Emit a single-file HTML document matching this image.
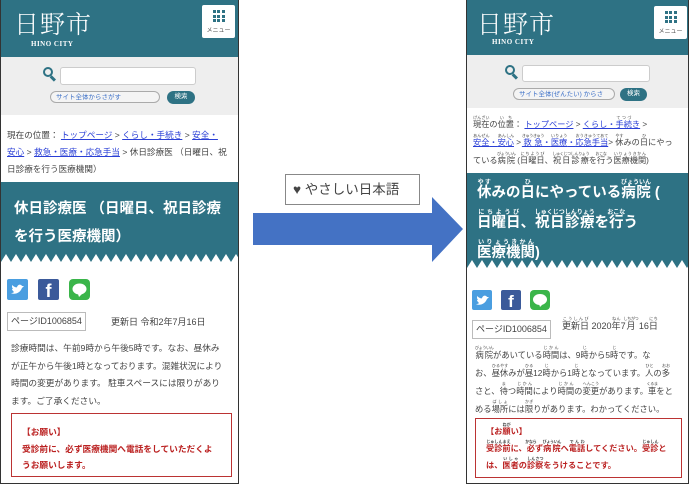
<!DOCTYPE html>
<html><head><meta charset="utf-8"><style>
*{margin:0;padding:0;box-sizing:border-box}
body{width:690px;height:484px;background:#fff;position:relative;overflow:hidden;font-family:"Liberation Sans","Noto Sans CJK JP",sans-serif;color:#333}
.ph{position:absolute;top:0;overflow:hidden;background:#fff}
.hd{background:#2e7284;position:relative}
.logo{position:absolute;color:#fff;font-family:"Liberation Serif","Noto Serif CJK SC",serif;font-size:25px;letter-spacing:1px;font-weight:300}
.city{position:absolute;color:#fff;font-family:"Liberation Serif",serif;font-size:7px;font-weight:bold;letter-spacing:.5px}
.menu{position:absolute;background:#fff;border-radius:2px;width:33px;height:33px;font-size:6px;color:#555;text-align:center}
.dots{display:grid;grid-template-columns:repeat(3,3px);gap:1.5px;width:12px;margin:5px auto 3px}
.dots i{width:3px;height:3px;background:#2e7284;display:block}
.sr{background:#eee;position:relative}
.inp{position:absolute;background:#fff;border:1px solid #ccc;border-radius:3px}
.sel{position:absolute;border:1px solid #aaa;border-radius:8px;background:#f4f4f4;font-size:6.5px;color:#3b6fc7;padding-left:5px;line-height:11px;white-space:nowrap;overflow:hidden}
.btn{position:absolute;background:#2e7284;color:#fff;border-radius:7px;font-size:6.5px;text-align:center;line-height:12px}
.mag{position:absolute;width:10px;height:10px;border:2.5px solid #2e7284;border-radius:50%}
.mag:after{content:"";position:absolute;width:6px;height:2.5px;background:#2e7284;transform:rotate(45deg);left:5px;top:8px}
.bc{color:#444;padding:0 6px;white-space:nowrap}
.bc a{color:#2a3fd6;text-decoration:underline}
.tt{background:#2e7284;color:#fff;font-weight:bold;position:relative;white-space:nowrap}
.ic{position:absolute;width:21px;height:21px;border-radius:2px;overflow:hidden}
.pid{position:absolute;border:1px solid #bbb;font-size:9px;padding:0 3px;line-height:17px;color:#444}
.upd{position:absolute;font-size:9px;color:#444;white-space:nowrap}
.tx{position:absolute;color:#444;white-space:nowrap}
.box{position:absolute;border:1.5px solid #b33;color:#b22;font-weight:bold;white-space:nowrap}
rt{font-size:4px;color:#444;letter-spacing:-0.3px}
.tt rt{font-size:6px;color:#fff;letter-spacing:0}
.zz{position:absolute;left:0}
</style></head><body>

<!-- LEFT PHONE -->
<div class="ph" style="left:0;width:239px;height:484px;border:1px solid #333;border-top:none">
 <div class="hd" style="height:57px">
  <div class="logo" style="left:13px;top:5px">日野市</div>
  <div class="city" style="left:30px;top:40px">HINO CITY</div>
  <div class="menu" style="left:201px;top:5px"><div class="dots"><i></i><i></i><i></i><i></i><i></i><i></i><i></i><i></i><i></i></div>メニュー</div>
 </div>
 <div class="sr" style="height:58px">
  <div class="mag" style="left:42px;top:10px"></div>
  <div class="inp" style="left:59px;top:10px;width:136px;height:18px"></div>
  <div class="sel" style="left:49px;top:34px;width:110px;height:12px">サイト全体からさがす</div>
  <div class="btn" style="left:166px;top:34px;width:28px;height:13px">検索</div>
 </div>
 <div class="bc" style="height:67px;padding-top:12px;font-size:8.6px;line-height:17px">現在の位置： <a>トップページ</a> &gt; <a>くらし・手続き</a> &gt; <a>安全・</a><br><a>安心</a> &gt; <a>救急・医療・応急手当</a> &gt; 休日診療医 （日曜日、祝<br>日診療を行う医療機関）</div>
 <div class="tt" style="height:80px;padding:13px 0 0 13px;font-size:14.5px;line-height:28px">休日診療医 （日曜日、祝日診療<br>を行う医療機関）
  <svg class="zz" style="top:72px" width="240" height="8"><defs><pattern id="z1" width="10" height="8" patternUnits="userSpaceOnUse"><polygon points="0,8 5,0 10,8" fill="#fff"/></pattern></defs><rect width="240" height="8" fill="url(#z1)"/></svg></div>
 <div class="ic" style="left:6px;top:279px;background:#4a9ee0"><svg width="21" height="21"><path d="M4 14c4 2 9 0 11-5l2-2-2 0c-1-2-4-2-5 1 0 1-3 0-5-2 0 2 0 3 1 4l-1 0c0 1 1 2 2 3-1 1-2 1-3 1z" fill="#fff"/></svg></div>
 <div class="ic" style="left:37px;top:279px;background:#3b5a9a;color:#fff;font-size:18px;font-weight:bold;text-align:center;line-height:25px">f</div>
 <div class="ic" style="left:68px;top:279px;background:#3ab54a;border-radius:4px"><svg width="21" height="21"><ellipse cx="10.5" cy="10" rx="7" ry="5.5" fill="#fff"/><path d="M9 15l1 3 3-3z" fill="#fff"/></svg></div>
 <div class="pid" style="left:6px;top:312px">ページID1006854</div>
 <div class="upd" style="left:110px;top:315px">更新日 令和2年7月16日</div>
 <div class="tx" style="left:10px;top:340px;line-height:17.5px;font-size:8.7px">診療時間は、午前9時から午後5時です。なお、昼休み<br>が正午から午後1時となっております。混雑状況により<br>時間の変更があります。 駐車スペースには限りがあり<br>ます。ご了承ください。</div>
 <div class="box" style="left:10px;top:413px;width:221px;height:64px;padding:10px 0 0 10px;line-height:16.5px;font-size:8.7px">【お願い】<br>受診前に、必ず医療機関へ電話をしていただくよ<br>うお願いします。</div>
</div>

<!-- MIDDLE -->
<div style="position:absolute;left:285px;top:174px;width:135px;height:31px;border:1px solid #888;font-size:13.5px;color:#444;line-height:29px;padding-left:7px">♥ やさしい日本語</div>
<svg style="position:absolute;left:250px;top:195px" width="216" height="70"><polygon points="3,18 182,18 182,2 213,34 182,67 182,50 3,50" fill="#4472c4"/></svg>

<!-- RIGHT PHONE -->
<div class="ph" style="left:466px;width:223px;height:484px;border:1px solid #333;border-top:none">
 <div class="hd" style="height:55px">
  <div class="logo" style="left:10px;top:5px">日野市</div>
  <div class="city" style="left:25px;top:38px">HINO CITY</div>
  <div class="menu" style="left:187px;top:6px"><div class="dots"><i></i><i></i><i></i><i></i><i></i><i></i><i></i><i></i><i></i></div>メニュー</div>
 </div>
 <div class="sr" style="height:53px">
  <div class="mag" style="left:38px;top:10px"></div>
  <div class="inp" style="left:55px;top:10px;width:128px;height:17px"></div>
  <div class="sel" style="left:46px;top:33px;width:102px;height:12px">サイト全体(ぜんたい) からさ</div>
  <div class="btn" style="left:153px;top:33px;width:27px;height:13px">検索</div>
 </div>
 <div class="bc" style="height:65px;padding-top:8px;font-size:8.2px;line-height:18px"><ruby>現在<rt>げんざい</rt></ruby>の<ruby>位置<rt>いち</rt></ruby>： <a>トップページ</a> &gt; <a>くらし・<ruby>手続<rt>てつづ</rt></ruby>き</a> &gt;<br><a><ruby>安全<rt>あんぜん</rt></ruby>・<ruby>安心<rt>あんしん</rt></ruby></a> &gt; <a><ruby>救急<rt>きゅうきゅう</rt></ruby>・<ruby>医療<rt>いりょう</rt></ruby>・<ruby>応急手当<rt>おうきゅうてあて</rt></ruby></a>&gt; <ruby>休<rt>やす</rt></ruby>みの<ruby>日<rt>ひ</rt></ruby>にやっ<br>ている<ruby>病院<rt>びょういん</rt></ruby> (<ruby>日曜日<rt>にちようび</rt></ruby>、<ruby>祝日診療<rt>しゅくじつしんりょう</rt></ruby>を<ruby>行<rt>おこな</rt></ruby>う<ruby>医療機関<rt>いりょうきかん</rt></ruby>)</div>
 <div class="tt" style="height:95px;padding:5px 0 0 10px;font-size:14.5px;line-height:30px"><ruby>休<rt>やす</rt></ruby>みの<ruby>日<rt>ひ</rt></ruby>にやっている<ruby>病院<rt>びょういん</rt></ruby> (<br><ruby>日曜日<rt>にちようび</rt></ruby>、<ruby>祝日診療<rt>しゅくじつしんりょう</rt></ruby>を<ruby>行<rt>おこな</rt></ruby>う<br><ruby>医療機関<rt>いりょうきかん</rt></ruby>)
  <svg class="zz" style="top:87px" width="230" height="8"><defs><pattern id="z2" width="10" height="8" patternUnits="userSpaceOnUse"><polygon points="0,8 5,0 10,8" fill="#fff"/></pattern></defs><rect width="230" height="8" fill="url(#z2)"/></svg></div>
 <div class="ic" style="left:5px;top:290px;background:#4a9ee0;width:20px;height:20px"><svg width="20" height="20"><path d="M4 14c4 2 9 0 11-5l2-2-2 0c-1-2-4-2-5 1 0 1-3 0-5-2 0 2 0 3 1 4l-1 0c0 1 1 2 2 3-1 1-2 1-3 1z" fill="#fff"/></svg></div>
 <div class="ic" style="left:34px;top:290px;background:#3b5a9a;width:20px;height:20px;color:#fff;font-size:17px;font-weight:bold;text-align:center;line-height:24px">f</div>
 <div class="ic" style="left:63px;top:290px;background:#3ab54a;width:20px;height:20px;border-radius:4px"><svg width="20" height="20"><ellipse cx="10" cy="9.5" rx="7" ry="5.5" fill="#fff"/><path d="M9 14l1 3 3-3z" fill="#fff"/></svg></div>
 <div class="pid" style="left:5px;top:320px">ページID1006854</div>
 <div class="upd" style="left:95px;top:315px;line-height:22px"><ruby>更新日<rt>こうしんび</rt></ruby> 2020<ruby>年<rt>ねん</rt></ruby>7<ruby>月<rt>しちがつ</rt></ruby> 16<ruby>日<rt>にち</rt></ruby></div>
 <div class="tx" style="left:8px;top:345px;line-height:18px;font-size:8.3px"><ruby>病院<rt>びょういん</rt></ruby>があいている<ruby>時間<rt>じかん</rt></ruby>は、9<ruby>時<rt>じ</rt></ruby>から5<ruby>時<rt>じ</rt></ruby>です。な<br>お、<ruby>昼休<rt>ひるやす</rt></ruby>みが<ruby>昼<rt>ひる</rt></ruby>12<ruby>時<rt>じ</rt></ruby>から1<ruby>時<rt>じ</rt></ruby>となっています。<ruby>人<rt>ひと</rt></ruby>の<ruby>多<rt>おお</rt></ruby><br>さと、<ruby>待<rt>ま</rt></ruby>つ<ruby>時間<rt>じかん</rt></ruby>により<ruby>時間<rt>じかん</rt></ruby>の<ruby>変更<rt>へんこう</rt></ruby>があります。<ruby>車<rt>くるま</rt></ruby>をと<br>める<ruby>場所<rt>ばしょ</rt></ruby>には<ruby>限<rt>かぎ</rt></ruby>りがあります。わかってください。</div>
 <div class="box" style="left:8px;top:418px;width:207px;height:60px;padding:4px 0 0 10px;line-height:17px;font-size:8.2px">【お<ruby>願<rt>ねが</rt></ruby>い】<br><ruby>受診前<rt>じゅしんまえ</rt></ruby>に、<ruby>必<rt>かなら</rt></ruby>ず<ruby>病院<rt>びょういん</rt></ruby>へ<ruby>電話<rt>でんわ</rt></ruby>してください。<ruby>受診<rt>じゅしん</rt></ruby>と<br>は、<ruby>医者<rt>いしゃ</rt></ruby>の<ruby>診察<rt>しんさつ</rt></ruby>をうけることです。</div>
</div>
</body></html>
